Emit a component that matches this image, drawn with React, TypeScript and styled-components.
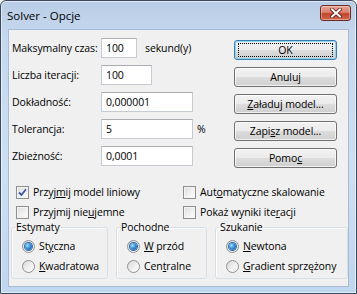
import styled, { createGlobalStyle } from 'styled-components';

const GlobalStyle = createGlobalStyle`
  html, body {
    margin: 0;
    padding: 0;
    background: #ffffff;
  }
  body {
    font-family: "Open Sans", "Noto Sans", "Liberation Sans", sans-serif;
    font-size: 10.5px;
    letter-spacing: -0.1px;
    color: #000000;
  }
  * {
    box-sizing: border-box;
  }
`;

type Field = { label: string; value: string; width: number; suffix?: string; suffixGap?: number };

const fields: Field[] = [
  { label: 'Maksymalny czas:', value: '100', width: 36, suffix: 'sekund(y)', suffixGap: 8 },
  { label: 'Liczba iteracji:', value: '100', width: 51 },
  { label: 'Dokładność:', value: '0,000001', width: 92 },
  { label: 'Tolerancja:', value: '5', width: 92, suffix: '%', suffixGap: 4 },
  { label: 'Zbieżność:', value: '0,0001', width: 92 },
];

// text with one access-key letter underlined: [before, key, after]
type Keyed = [string, string, string];

const buttons: { text: Keyed; isDefault?: boolean }[] = [
  { text: ['OK', '', ''], isDefault: true },
  { text: ['Anuluj', '', ''] },
  { text: ['', 'Z', 'aładuj model...'] },
  { text: ['Zapi', 's', 'z model...'] },
  { text: ['Pomo', 'c', ''] },
];

const checks: { text: Keyed; checked: boolean }[] = [
  { text: ['Przyj', 'm', 'ij model liniowy'], checked: true },
  { text: ['Aut', 'o', 'matyczne skalowanie'], checked: false },
  { text: ['Przyjmij nie', 'u', 'jemne'], checked: false },
  { text: ['Pokaż wyniki ite', 'r', 'acji'], checked: false },
];

const groups: { title: string; width: number; options: Keyed[] }[] = [
  { title: 'Estymaty', width: 97, options: [['St', 'y', 'czna'], ['', 'K', 'wadratowa']] },
  { title: 'Pochodne', width: 91, options: [['', 'W', ' przód'], ['Cen', 't', 'ralne']] },
  { title: 'Szukanie', width: 133, options: [['', 'N', 'ewtona'], ['', 'G', 'radient sprzężony']] },
];

function KeyText({ text }: { text: Keyed }) {
  return (
    <>
      {text[0]}
      {text[1] ? <u>{text[1]}</u> : null}
      {text[2]}
    </>
  );
}

function CloseIcon() {
  return (
    <svg width="12" height="10" viewBox="0 0 12 10">
      <path d="M2 1.5 L10 8.5 M10 1.5 L2 8.5" stroke="#5a1a12" strokeWidth="3.6" strokeLinecap="square" />
      <path d="M2 1.5 L10 8.5 M10 1.5 L2 8.5" stroke="#ffffff" strokeWidth="2" strokeLinecap="square" />
    </svg>
  );
}

function CheckMark() {
  return (
    <svg width="9" height="9" viewBox="0 0 9 9">
      <path d="M1 4.5 L3.5 7 L8 1.2" fill="none" stroke="#3d56b0" strokeWidth="1.8" />
    </svg>
  );
}

function App() {
  return (
    <>
      <GlobalStyle />
      <Window>
        <TitleBar>
          <Title>Solver - Opcje</Title>
          <CloseButton>
            <CloseIcon />
          </CloseButton>
        </TitleBar>
        <Client>
          <TopSection>
            <Fields>
              {fields.map((f) => (
                <FieldRow key={f.label}>
                  <FieldLabel>{f.label}</FieldLabel>
                  <TextBox width={f.width}>{f.value}</TextBox>
                  {f.suffix ? <Suffix gap={f.suffixGap ?? 0}>{f.suffix}</Suffix> : null}
                </FieldRow>
              ))}
            </Fields>
            <Buttons>
              {buttons.map((b) => (
                <PushButton key={b.text.join('')} isDefault={!!b.isDefault}>
                  <ButtonText isDefault={!!b.isDefault}>
                    <KeyText text={b.text} />
                  </ButtonText>
                </PushButton>
              ))}
            </Buttons>
          </TopSection>
          <CheckGrid>
            {checks.map((c) => (
              <CheckRow key={c.text.join('')}>
                <CheckBox>{c.checked ? <CheckMark /> : null}</CheckBox>
                <span>
                  <KeyText text={c.text} />
                </span>
              </CheckRow>
            ))}
          </CheckGrid>
          <Groups>
            {groups.map((g) => (
              <GroupBox key={g.title} width={g.width}>
                <GroupTitle>{g.title}</GroupTitle>
                {g.options.map((o, i) => (
                  <RadioRow key={o.join('')}>
                    <Radio>{i === 0 ? <RadioDot /> : null}</Radio>
                    <span>
                      <KeyText text={o} />
                    </span>
                  </RadioRow>
                ))}
              </GroupBox>
            ))}
          </Groups>
        </Client>
      </Window>
    </>
  );
}

export default App;

const Window = styled.div`
  width: 357px;
  height: 294px;
  display: flex;
  flex-direction: column;
  border: 1px solid #3b4a60;
  border-radius: 6px 6px 0 0;
  background: linear-gradient(180deg, #b9cde6 0%, #c6d8ee 12%, #cddff2 60%, #bfd6ef 100%);
  box-shadow: inset 0 0 0 1px rgba(255, 255, 255, 0.55);
  overflow: hidden;
`;

const TitleBar = styled.div`
  height: 28px;
  display: flex;
  align-items: flex-start;
  justify-content: space-between;
  padding: 0 5px 0 6px;
`;

const Title = styled.div`
  margin-top: 7px;
  font-size: 11.5px;
  letter-spacing: 0;
  line-height: 16px;
  color: #000000;
`;

const CloseButton = styled.div`
  width: 31px;
  height: 16px;
  margin-top: 4px;
  display: flex;
  align-items: center;
  justify-content: center;
  border: 1px solid #6b2b22;
  border-radius: 3px;
  background: linear-gradient(180deg, #e8a493 0%, #d9806b 45%, #c2452c 55%, #d0694f 100%);
  box-shadow: inset 0 0 0 1px rgba(255, 255, 255, 0.35);
`;

const Client = styled.div`
  flex: 1;
  margin: 0 7px 6px 7px;
  border: 1px solid #a7bbd4;
  background: #f0f0f0;
  display: flex;
  flex-direction: column;
`;

const TopSection = styled.div`
  display: flex;
  justify-content: space-between;
  align-items: flex-start;
`;

const Fields = styled.div`
  display: flex;
  flex-direction: column;
  gap: 7px;
  padding: 8px 0 0 3px;
`;

const FieldRow = styled.div`
  height: 20px;
  display: flex;
  align-items: center;
`;

const FieldLabel = styled.div`
  width: 89px;
  white-space: nowrap;
`;

const TextBox = styled.div<{ width: number }>`
  width: ${(p) => p.width}px;
  height: 20px;
  padding: 0 4px;
  line-height: 18px;
  background: #ffffff;
  border: 1px solid #c6cad2;
  border-top-color: #abadb3;
`;

const Suffix = styled.div<{ gap: number }>`
  margin-left: ${(p) => p.gap}px;
`;

const Buttons = styled.div`
  display: flex;
  flex-direction: column;
  gap: 7px;
  padding: 10px 11px 0 0;
`;

const PushButton = styled.div<{ isDefault: boolean }>`
  width: 103px;
  height: 20px;
  display: flex;
  align-items: center;
  justify-content: center;
  border: 1px solid ${(p) => (p.isDefault ? '#3c7fb1' : '#707070')};
  border-radius: 3px;
  background: linear-gradient(180deg, #f2f2f2 0%, #ebebeb 50%, #dddddd 51%, #cfcfcf 100%);
  box-shadow: inset 0 0 0 1px ${(p) => (p.isDefault ? '#8fd3f0' : 'rgba(255, 255, 255, 0.7)')};
`;

const ButtonText = styled.div<{ isDefault: boolean }>`
  width: 95px;
  height: 14px;
  line-height: 13px;
  text-align: center;
  border: 1px dotted ${(p) => (p.isDefault ? '#000000' : 'transparent')};
`;

const CheckGrid = styled.div`
  display: grid;
  grid-template-columns: 167px auto;
  grid-auto-rows: 20px;
  margin-top: 14px;
  padding-left: 7px;
`;

const CheckRow = styled.div`
  display: flex;
  align-items: center;
  gap: 4px;
  white-space: nowrap;
`;

const CheckBox = styled.div`
  width: 13px;
  height: 13px;
  display: flex;
  align-items: center;
  justify-content: center;
  border: 1px solid #8e8f8f;
  background: linear-gradient(135deg, #dcdcdc 0%, #f2f2f2 60%, #ffffff 100%);
  box-shadow: inset 0 0 0 1px #f4f4f4;
`;

const Groups = styled.div`
  display: flex;
  gap: 8px;
  margin-top: -3px;
  padding-left: 2px;
`;

const GroupBox = styled.fieldset<{ width: number }>`
  width: ${(p) => p.width}px;
  margin: 0;
  padding: 1px 0 2px 10px;
  border: 1px solid #d5dfe5;
  border-radius: 3px;
  box-shadow: inset 1px 1px 0 #ffffff;
  min-width: 0;
`;

const GroupTitle = styled.legend`
  margin-left: -7px;
  padding: 0 1px;
  line-height: 16px;
  color: #000000;
`;

const RadioRow = styled.div`
  height: 20px;
  display: flex;
  align-items: center;
  gap: 4px;
  white-space: nowrap;
`;

const Radio = styled.div`
  width: 13px;
  height: 13px;
  border-radius: 50%;
  display: flex;
  align-items: center;
  justify-content: center;
  border: 1px solid #8f9296;
  background: linear-gradient(135deg, #d6d6d6 0%, #f0f0f0 55%, #ffffff 100%);
`;

const RadioDot = styled.div`
  width: 7px;
  height: 7px;
  border-radius: 50%;
  background: radial-gradient(circle at 35% 35%, #a6e2ff 0%, #3a8fd6 45%, #1b4f9a 100%);
  box-shadow: 0 0 0 1px #2c6cb0;
`;
